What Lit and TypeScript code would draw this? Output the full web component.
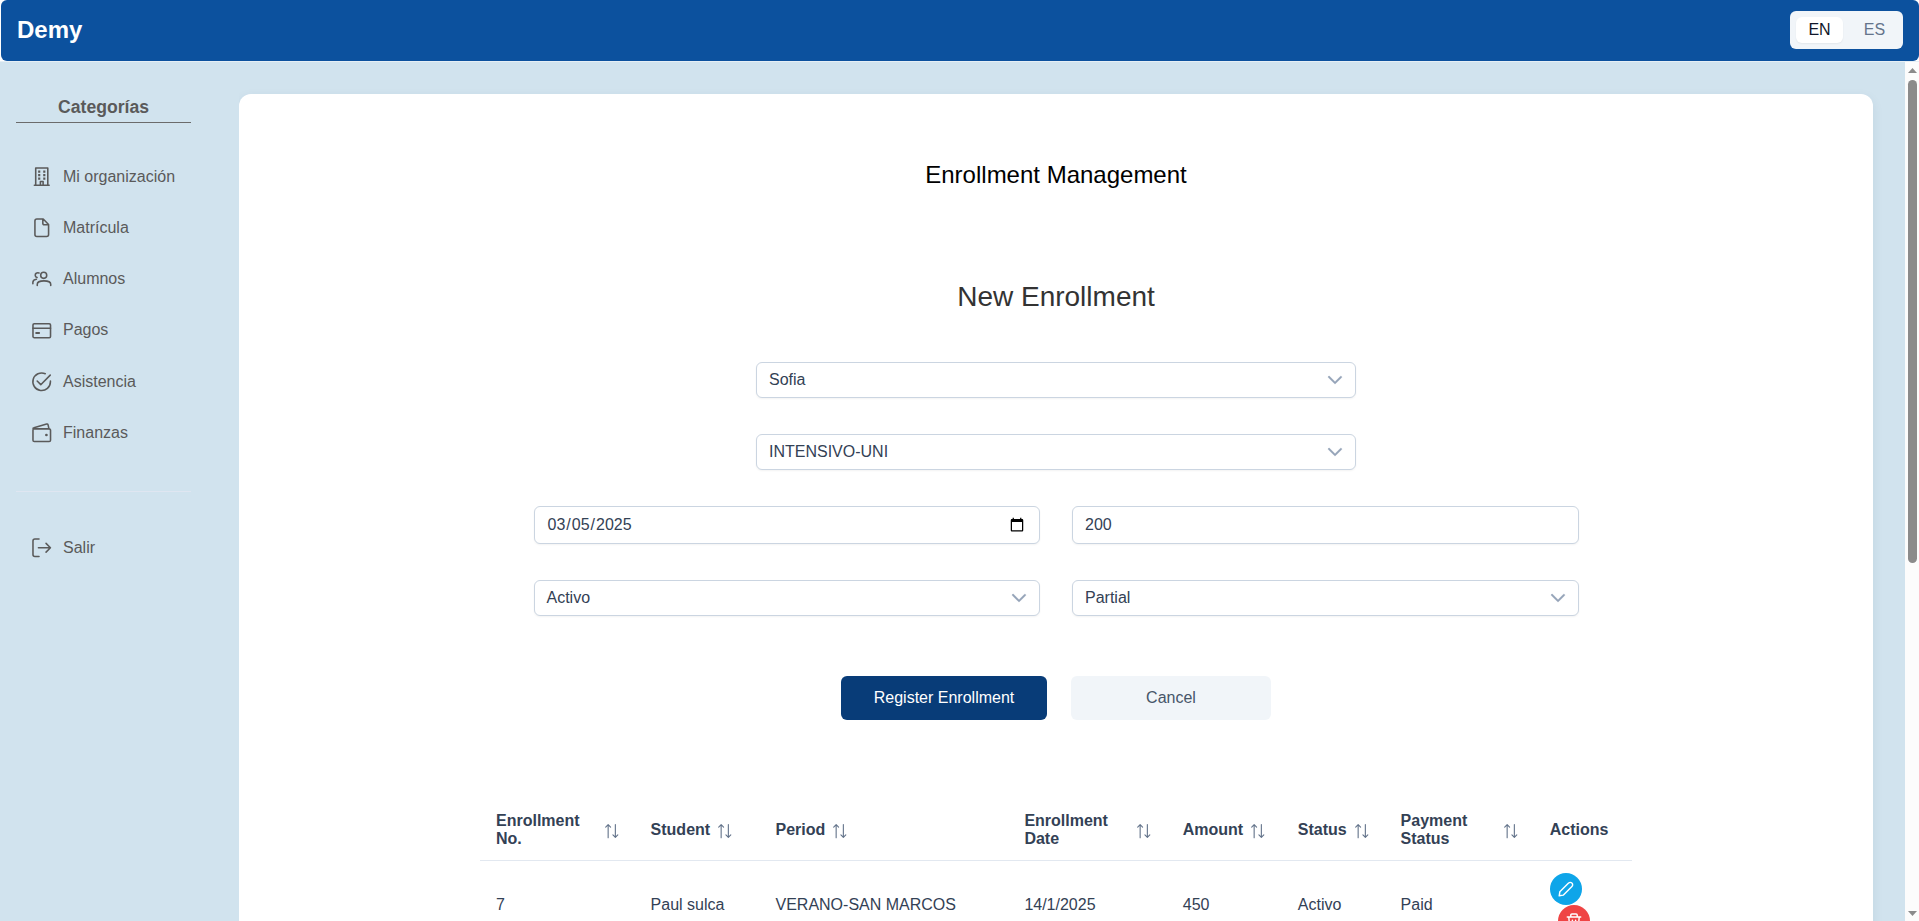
import { LitElement, html, svg, css, TemplateResult } from "lit";
import { customElement, property } from "lit/decorators.js";

const icons: Record<string, TemplateResult> = {
  building: svg`<path d="M3.800 18V1.100h12.400V18M2.400 18.800h15.200M8.600 18v-3.200h2.800V18" /><path class="solid" d="M6.300 3.600h2.200v2.200h-2.200zM11.500 3.600h2.200v2.200h-2.200zM6.300 7.200h2.200v2.200h-2.200zM11.500 7.200h2.200v2.200h-2.200zM6.300 10.800h2.200v2.200h-2.200zM11.500 10.800h2.200v2.200h-2.200z" />`,
  file: svg`<path d="M11.500 1H5a2 2 0 0 0-2 2v14a2 2 0 0 0 2 2h10a2 2 0 0 0 2-2V6.600zM11.100 1.200v4.500a1.300 1.300 0 0 0 1.300 1.300h4.400" />`,
  users: svg`<circle cx="12" cy="6.500" r="3.100" /><path d="M5.400 16.800v-1.200c0-2.400 2.700-3.400 6.900-3.400s6.900 1 6.900 3.400v1.200M7.200 4.100c-2.400-.7-3.900.6-3.900 2.200 0 1.300.8 2.100 1.900 2.400M.9 15.200v-1.500c0-1.900 1.100-2.900 3.600-3.200" />`,
  card: svg`<rect x="1" y="2.900" width="18" height="14.200" rx="1.300" /><path d="M1 7.500h18" /><path d="M4.300 12.400h3" stroke-width="2" />`,
  check: svg`<path d="M18.900 9.200V10a9 9 0 1 1-5.300-8.200M5.300 9.300l3.700 3.700L18.700 3.200" />`,
  wallet: svg`<path d="M1 7v10.600a1.400 1.400 0 0 0 1.400 1.400h15.200a1.400 1.400 0 0 0 1.400-1.400V7.400a1.400 1.400 0 0 0-1.400-1.400H2C.8 6 .7 5.100 2 4.800l13-3.700c.9-.2 1.300.1 1.500.8L17.400 6" /><circle class="solid" cx="14.800" cy="12.300" r="1.400" />`,
  exit: svg`<path d="M7.200 1H3a2 2 0 0 0-2 2v14a2 2 0 0 0 2 2h4.200M6.600 10h12.200M14.400 5.500 18.900 10l-4.500 4.500" />`,
  sort: svg`<path d="M4.500 19.500V1M1 4.500 4.500 1 8 4.500M14.800.7V19M11.300 15.500 14.800 19l3.500-3.500" />`,
  pencil: svg`<path d="M1.500 18.500l.8-5L13.200 2.600a2.900 2.900 0 0 1 4.200 0 2.900 2.900 0 0 1 0 4.200L6.500 17.700z" />`,
  trash: svg`<path d="M1.600 5h16.800M3.500 5l1 12.500a1.500 1.500 0 0 0 1.500 1.400h8a1.500 1.500 0 0 0 1.500-1.400l1-12.500M6 4.800V2.600A1.400 1.400 0 0 1 7.400 1.200h5.200a1.400 1.400 0 0 1 1.400 1.400v2.200M8 9v6M12 9v6" />`,
};

@customElement("ui-icon")
class UiIcon extends LitElement {
  @property() name = "file";
  static styles = css`
    :host { display: block; width: 19.5px; height: 19.5px; flex: none; }
    svg { display: block; width: 100%; height: 100%; fill: none; stroke: currentColor; stroke-width: var(--stroke, 1.6); stroke-linecap: round; stroke-linejoin: round; overflow: visible; }
    .solid { fill: currentColor; stroke: none; }
  `;
  render() {
    return html`<svg viewBox="0 0 20 20">${icons[this.name]}</svg>`;
  }
}

@customElement("ui-select")
class UiSelect extends LitElement {
  @property() value = "";
  static styles = css`
    :host { display: flex; box-sizing: border-box; height: 36px; border: 1px solid #cbd5e1; border-radius: 6px; background: #fff; align-items: center; justify-content: space-between; padding: 0 12px 0 12px; color: #334155; box-shadow: 0 1px 2px rgba(18, 18, 23, 0.05); }
    span { line-height: 18px; margin-bottom: 1px; }
    svg { width: 16px; height: 16px; fill: #94a3b8; stroke: #94a3b8; stroke-width: 0.25; flex: none; }
  `;
  render() {
    return html`<span>${this.value}</span>
      <svg viewBox="0 0 14 14"><path d="M7.017 10.398C6.913 10.399 6.809 10.378 6.712 10.338C6.615 10.298 6.528 10.239 6.454 10.164L1.139 4.849C1.033 4.694.985 4.507 1.004 4.320C1.023 4.133 1.107 3.958 1.242 3.827C1.376 3.697 1.553 3.617 1.740 3.604C1.928 3.591 2.114 3.644 2.266 3.754L7.017 8.474L11.769 3.754C11.919 3.657 12.097 3.613 12.275 3.629C12.453 3.645 12.620 3.721 12.750 3.843C12.880 3.966 12.965 4.128 12.991 4.305C13.018 4.482 12.984 4.662 12.896 4.817L7.581 10.132C7.510 10.213 7.423 10.278 7.327 10.323C7.230 10.369 7.124 10.394 7.017 10.398Z" /></svg>`;
  }
}

@customElement("app-root")
class AppRoot extends LitElement {
  private menu = [
    ["building", "Mi organización"],
    ["file", "Matrícula"],
    ["users", "Alumnos"],
    ["card", "Pagos"],
    ["check", "Asistencia"],
    ["wallet", "Finanzas"],
  ];
  private columns: [string, boolean][] = [
    ["Enrollment No.", true],
    ["Student", true],
    ["Period", true],
    ["Enrollment Date", true],
    ["Amount", true],
    ["Status", true],
    ["Payment Status", true],
    ["Actions", false],
  ];
  private rows = [["7", "Paul sulca", "VERANO-SAN MARCOS", "14/1/2025", "450", "Activo", "Paid"]];

  static styles = css`
    :host { display: flex; flex-direction: column; height: 100vh; overflow: hidden; background: #fff; font-family: "Liberation Sans", Arial, sans-serif; font-size: 16px; color: #334155; }
    * { box-sizing: border-box; }
    .topbar { flex: none; height: 61px; margin: 0 0 0 1px; padding: 0 16px; border-radius: 6px; background: #0c519e; display: flex; align-items: center; justify-content: space-between; }
    .brand { color: #fff; font-size: 24px; font-weight: 700; line-height: 28px; margin-bottom: 2px; }
    .lang { display: flex; width: 113px; height: 38px; margin-bottom: 1px; border-radius: 6px; background: #f1f5f9; padding: 6px; }
    .lang span { flex: 1; display: flex; align-items: center; justify-content: center; padding-left: 6px; border-radius: 6px; color: #64748b; }
    .lang .on { flex: 0 0 47px; margin-right: 3px; padding-left: 0; background: #fff; color: #0f172a; box-shadow: 0 1px 2px rgba(0, 0, 0, 0.06); }
    .body { flex: 1; min-height: 0; display: grid; grid-template-columns: 239px 1fr 14px; background: #d1e3ee; border-top: 1px solid #e6eff5; }
    .side { padding: 32px 48px 0 16px; color: #5a5a5a; }
    .side h2 { margin: 0 0 28.2px; height: 29px; border-bottom: 1px solid #6b6b6b; font-size: 17.6px; line-height: 27px; font-weight: 700; text-align: center; }
    .item { display: flex; align-items: center; height: 51.2px; padding-left: 16px; gap: 11.5px; line-height: 20px; white-space: nowrap; }
    .divider { height: 1px; background: #dfe6f1; margin: 32.6px 0 30.6px; }
    .main { padding: 32px 32px 0 0; overflow: hidden; }
    .card { height: 900px; border-radius: 12px; background: #fff; box-shadow: 0 4px 12px rgba(0, 60, 90, 0.08); display: flex; flex-direction: column; align-items: center; padding-top: 67px; }
    .card h1 { margin: 0; color: #000; font-size: 24px; line-height: 28px; font-weight: 400; }
    .card h3 { margin: 92px 0 0; color: #333; font-size: 28px; line-height: 32px; font-weight: 400; }
    .form { width: 1045px; margin-top: 49px; display: grid; grid-template-columns: 1fr 1fr; column-gap: 32px; row-gap: 36px; }
    .wide { grid-column: 1 / -1; justify-self: center; width: 600px; }
    .field { height: 38px; width: 100%; border: 1px solid #cbd5e1; border-radius: 6px; padding: 0 12px 1px; font: inherit; color: #334155; background: #fff; box-shadow: 0 1px 2px rgba(18, 18, 23, 0.05); outline: none; }
    .actions { display: flex; gap: 24px; margin-top: 60px; }
    .actions button { border: 0; height: 44px; width: 200px; border-radius: 6px; font: inherit; background: #f1f5f9; color: #475569; padding: 0 0 1px; line-height: 19px; }
    .actions .primary { width: 206px; background: #083c78; color: #fff; }
    .table { width: 1152px; margin-top: 79px; }
    .row { display: grid; grid-template-columns: 154.6px 124.9px 248.9px 158.4px 115px 102.8px 149.2px 1fr; align-items: center; }
    .row > div { padding: 12px 16px; }
    .head { border-bottom: 1px solid #e2e8f0; height: 62px; font-weight: 600; line-height: 18px; }
    .head > div { display: flex; align-items: center; gap: 8px; }
    .head ui-icon { width: 14px; height: 14px; color: #64748b; --stroke: 1.6; margin-top: 2px; }
    .ops { display: flex; flex-direction: column; }
    .ops i { width: 32px; height: 32px; border-radius: 50%; background: #0ea5e9; color: #fff; display: grid; place-items: center; }
    .ops i + i { margin-left: 8px; background: #ef4444; }
    .ops ui-icon { width: 16px; height: 16px; --stroke: 1.8; }
    .scroll { background: #fcfcfc; display: flex; flex-direction: column; align-items: center; padding: 6px 2px 5px 3px; }
    .scroll svg { width: 9px; height: 5px; fill: #8b8b8b; flex: none; }
    .thumb { width: 9px; height: 483px; border-radius: 5px; background: #8b8b8b; margin: 7px 0 auto; }
  `;

  render() {
    return html`
      <header class="topbar">
        <div class="brand">Demy</div>
        <div class="lang"><span class="on">EN</span><span>ES</span></div>
      </header>
      <div class="body">
        <nav class="side">
          <h2>Categorías</h2>
          ${this.menu.map(([icon, label]) => html`<div class="item"><ui-icon name=${icon}></ui-icon><span>${label}</span></div>`)}
          <div class="divider"></div>
          <div class="item"><ui-icon name="exit"></ui-icon><span>Salir</span></div>
        </nav>
        <main class="main">
          <section class="card">
            <h1>Enrollment Management</h1>
            <h3>New Enrollment</h3>
            <div class="form">
              <ui-select class="wide" value="Sofia"></ui-select>
              <ui-select class="wide" value="INTENSIVO-UNI"></ui-select>
              <input class="field" type="date" value="2025-03-05" />
              <input class="field" type="text" value="200" />
              <ui-select value="Activo"></ui-select>
              <ui-select value="Partial"></ui-select>
            </div>
            <div class="actions">
              <button class="primary">Register Enrollment</button>
              <button>Cancel</button>
            </div>
            <div class="table">
              <div class="row head">
                ${this.columns.map(([label, sortable]) => html`<div><span>${label}</span>${sortable ? html`<ui-icon name="sort"></ui-icon>` : ""}</div>`)}
              </div>
              ${this.rows.map((cells) => html`<div class="row">
                ${cells.map((c) => html`<div>${c}</div>`)}
                <div class="ops"><i><ui-icon name="pencil"></ui-icon></i><i><ui-icon name="trash"></ui-icon></i></div>
              </div>`)}
            </div>
          </section>
        </main>
        <div class="scroll">
          <svg viewBox="0 0 9 5"><path d="M0 5 4.500 0 9 5z" /></svg>
          <div class="thumb"></div>
          <svg viewBox="0 0 9 5"><path d="M0 0 4.500 5 9 0z" /></svg>
        </div>
      </div>
    `;
  }
}
